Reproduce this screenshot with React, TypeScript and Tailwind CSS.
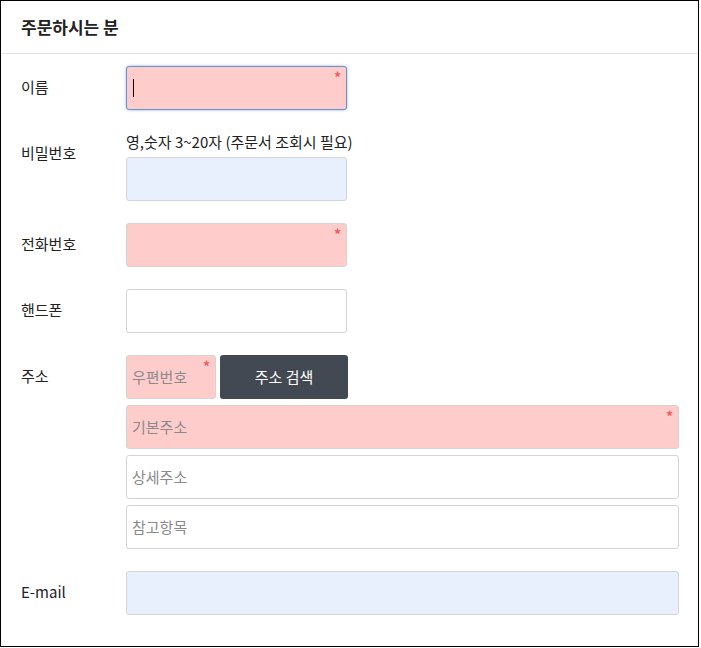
import React from "react";

const font = { fontFamily: '"Malgun Gothic", "Noto Sans CJK KR", "Noto Sans", sans-serif' };

type FieldProps = {
  className?: string;
  placeholder?: string;
  required?: boolean;
  tone?: "pink" | "blue" | "white";
  focused?: boolean;
};

function Field({ className = "", placeholder, required, tone = "white", focused }: FieldProps) {
  const bg = tone === "pink" ? "bg-[#ffcccc]" : tone === "blue" ? "bg-[#e8f0fe]" : "bg-white";
  const border = focused
    ? "border-[#6b92c6] shadow-[0_0_3px_rgba(102,150,210,0.7)]"
    : "border-[#d4d4d4]";
  return (
    <div className={`relative h-[44px] rounded-[3px] border ${border} ${bg} ${className}`}>
      <div className="flex h-full items-center pl-[5px] text-[15px] text-[#8a8a8a]">
        {focused && <span className="ml-px h-[18px] w-px bg-black" />}
        {placeholder}
      </div>
      {required && (
        <span className="absolute right-[5px] top-[3px] text-[14px] font-bold leading-none text-[#f25b5b]">*</span>
      )}
    </div>
  );
}

function Row({ label, children }: { label: string; children: React.ReactNode }) {
  return (
    <div className="flex">
      <div className="w-[105px] shrink-0 pt-[11px] text-[15px] leading-5 text-[#222]">{label}</div>
      <div className="flex-1">{children}</div>
    </div>
  );
}

export default function App() {
  return (
    <div style={font} className="h-[648px] w-[701px] bg-white">
      <div className="h-[647px] w-[699px] border border-black">
        <div className="flex h-[53px] items-center border-b border-[#e3e3e3] pl-[20px]">
          <h2 className="text-[17px] font-bold text-[#222]">주문하시는 분</h2>
        </div>
        <div className="flex flex-col gap-[22px] pl-[20px] pr-[19px] pt-[12px]">
          <Row label="이름">
            <Field className="w-[221px]" tone="pink" required focused />
          </Row>
          <Row label="비밀번호">
            <p className="mb-[5px] h-5 text-[15px] leading-5 text-[#222]">영,숫자 3~20자 (주문서 조회시 필요)</p>
            <Field className="w-[221px]" tone="blue" />
          </Row>
          <Row label="전화번호">
            <Field className="w-[221px]" tone="pink" required />
          </Row>
          <Row label="핸드폰">
            <Field className="w-[221px]" />
          </Row>
          <Row label="주소">
            <div className="flex flex-col gap-[6px]">
              <div className="flex gap-[4px]">
                <Field className="w-[90px]" tone="pink" placeholder="우편번호" required />
                <button className="h-[44px] w-[128px] rounded-[3px] bg-[#424952] text-[15px] text-white">
                  주소 검색
                </button>
              </div>
              <Field tone="pink" placeholder="기본주소" required />
              <Field placeholder="상세주소" />
              <Field placeholder="참고항목" />
            </div>
          </Row>
          <Row label="E-mail">
            <Field tone="blue" />
          </Row>
        </div>
      </div>
    </div>
  );
}
